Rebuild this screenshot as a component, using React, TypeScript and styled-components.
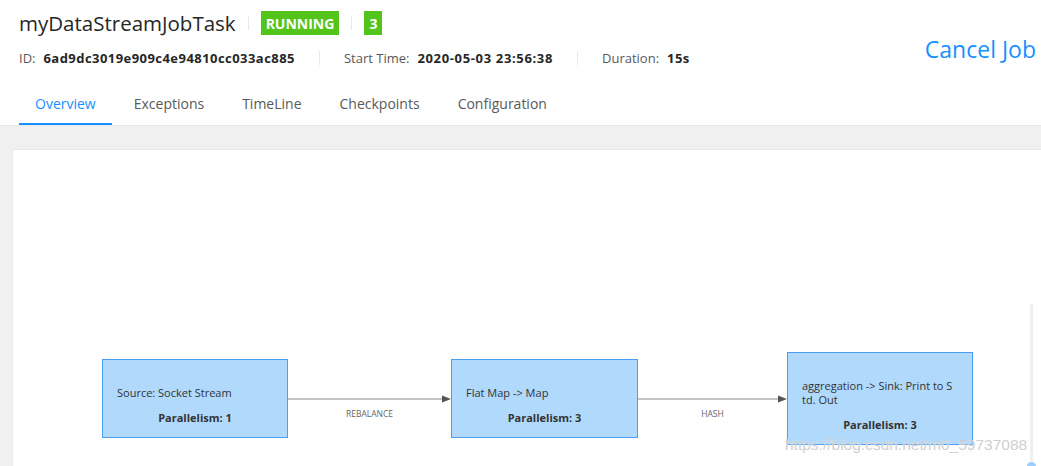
import React from "react";
import styled, { createGlobalStyle } from "styled-components";

const GlobalStyle = createGlobalStyle`
  html, body {
    margin: 0;
    padding: 0;
    background: #fff;
    font-family: "Open Sans", "Noto Sans", sans-serif;
    overflow: hidden;
  }
`;

const Page = styled.div`
  width: 1041px;
  height: 466px;
  overflow: hidden;
  display: flex;
  flex-direction: column;
`;

const Header = styled.div`
  display: flex;
  justify-content: space-between;
  align-items: flex-start;
  padding: 11px 5px 0 19px;
`;

const HeaderLeft = styled.div`
  display: flex;
  flex-direction: column;
`;

const TitleRow = styled.div`
  display: flex;
  align-items: center;
  height: 24px;
`;

const Title = styled.span`
  font-size: 20.5px;
  color: #262626;
  line-height: 24px;
`;

const Divider = styled.span<{ $h?: number; $gap?: number }>`
  display: inline-block;
  width: 1px;
  height: ${(p) => p.$h ?? 14}px;
  background: #e8e8e8;
  margin: 0 ${(p) => p.$gap ?? 12}px;
`;

const Badge = styled.span`
  display: inline-flex;
  align-items: center;
  justify-content: center;
  height: 24px;
  padding: 0 5px;
  background: #52c41a;
  color: #fff;
  font-weight: 700;
  font-size: 14px;
`;

const InfoRow = styled.div`
  display: flex;
  align-items: center;
  margin-top: 14px;
  font-size: 13px;
  height: 18px;
`;

const InfoLabel = styled.span`
  color: #595959;
`;

const InfoValue = styled.span<{ $ls?: number }>`
  color: #262626;
  font-weight: 700;
  margin-left: 8px;
  letter-spacing: ${(p) => p.$ls ?? 0.45}px;
`;

const CancelJob = styled.a`
  color: #1890ff;
  font-size: 23px;
  margin-top: 22px;
  cursor: pointer;
`;

const TabBar = styled.div`
  display: flex;
  padding: 0 0 0 19px;
  margin-top: 23px;
  border-bottom: 1px solid #e8e8e8;
`;

const Tab = styled.div<{ $active?: boolean }>`
  padding: 0 16px;
  margin-right: 6px;
  height: 33px;
  line-height: 27px;
  font-size: 14px;
  color: ${(p) => (p.$active ? "#1890ff" : "#595959")};
  border-bottom: 2px solid ${(p) => (p.$active ? "#1890ff" : "transparent")};
`;

const Body = styled.div`
  flex: 1;
  background: #f0f0f0;
  padding: 23px 0 0 12px;
  display: flex;
`;

const Card = styled.div`
  position: relative;
  flex: 1;
  background: #fff;
  border-top: 1px solid #e8e8e8;
  border-left: 1px solid #e8e8e8;
  padding: 202px 0 0 89px;
`;

const Graph = styled.div`
  display: flex;
  align-items: center;
`;

const Node = styled.div<{ $w: number; $h: number }>`
  box-sizing: border-box;
  width: ${(p) => p.$w}px;
  height: ${(p) => p.$h}px;
  background: #b0d9fc;
  border: 1px solid #4a9ff5;
  padding: 14px 18px 0 14px;
  display: flex;
  flex-direction: column;
  justify-content: center;
  font-size: 11px;
  color: #333;
  font-family: "Open Sans", "Noto Sans", sans-serif;
`;

const NodeName = styled.div`
  line-height: 14px;
  word-break: break-all;
`;

const NodePar = styled.div`
  text-align: center;
  font-weight: 700;
  margin-top: 10px;
  margin-right: -4px;
`;

const Edge = styled.div<{ $w: number }>`
  width: ${(p) => p.$w}px;
  display: flex;
  flex-direction: column;
  align-items: center;
  padding-top: 17px;
`;

const EdgeLabel = styled.div`
  font-size: 8.5px;
  color: #666;
  margin-top: 5px;
  height: 12px;
  line-height: 12px;
  font-family: "Open Sans", "Noto Sans", sans-serif;
`;

const Track = styled.div`
  position: absolute;
  right: 8px;
  top: 154px;
  bottom: 0;
  width: 3px;
  background: #efefef;
  &::after {
    content: "";
    position: absolute;
    left: -3px;
    bottom: -5px;
    width: 9px;
    height: 9px;
    border-radius: 50%;
    background: #9ccfff;
  }
`;

const Watermark = styled.div`
  position: absolute;
  left: 772px;
  top: 286px;
  font-family: "Liberation Sans", Arial, sans-serif;
  font-size: 15.5px;
  color: rgba(190, 190, 190, 0.75);
  text-shadow: 0 0 1px #fff;
  pointer-events: none;
  white-space: nowrap;
`;

function Arrow({ width }: { width: number }) {
  return (
    <svg width={width} height={8} viewBox={`0 0 ${width} 8`}>
      <line x1={0} y1={4} x2={width - 8} y2={4} stroke="#888" strokeWidth={1} />
      <polygon points={`${width - 9},0.5 ${width},4 ${width - 9},7.5`} fill="#555" />
    </svg>
  );
}

const tabs = ["Overview", "Exceptions", "TimeLine", "Checkpoints", "Configuration"];

export default function App() {
  return (
    <Page>
      <GlobalStyle />
      <Header>
        <HeaderLeft>
          <TitleRow>
            <Title>myDataStreamJobTask</Title>
            <Divider />
            <Badge>RUNNING</Badge>
            <Divider />
            <Badge>3</Badge>
          </TitleRow>
          <InfoRow>
            <InfoLabel>ID:</InfoLabel>
            <InfoValue>6ad9dc3019e909c4e94810cc033ac885</InfoValue>
            <Divider $gap={24} />
            <InfoLabel>Start Time:</InfoLabel>
            <InfoValue $ls={0.65}>2020-05-03 23:56:38</InfoValue>
            <Divider $gap={24} />
            <InfoLabel>Duration:</InfoLabel>
            <InfoValue>15s</InfoValue>
          </InfoRow>
        </HeaderLeft>
        <CancelJob>Cancel Job</CancelJob>
      </Header>
      <TabBar>
        {tabs.map((t, i) => (
          <Tab key={t} $active={i === 0}>
            {t}
          </Tab>
        ))}
      </TabBar>
      <Body>
        <Card>
          <Graph>
            <Node $w={186} $h={79}>
              <NodeName>Source: Socket Stream</NodeName>
              <NodePar>Parallelism: 1</NodePar>
            </Node>
            <Edge $w={163}>
              <Arrow width={163} />
              <EdgeLabel>REBALANCE</EdgeLabel>
            </Edge>
            <Node $w={187} $h={79}>
              <NodeName>Flat Map -&gt; Map</NodeName>
              <NodePar>Parallelism: 3</NodePar>
            </Node>
            <Edge $w={149}>
              <Arrow width={149} />
              <EdgeLabel>HASH</EdgeLabel>
            </Edge>
            <Node $w={186} $h={93}>
              <NodeName>aggregation -&gt; Sink: Print to Std. Out</NodeName>
              <NodePar>Parallelism: 3</NodePar>
            </Node>
          </Graph>
          <Track />
          <Watermark>https://blog.csdn.net/m0_59737088</Watermark>
        </Card>
      </Body>
    </Page>
  );
}
